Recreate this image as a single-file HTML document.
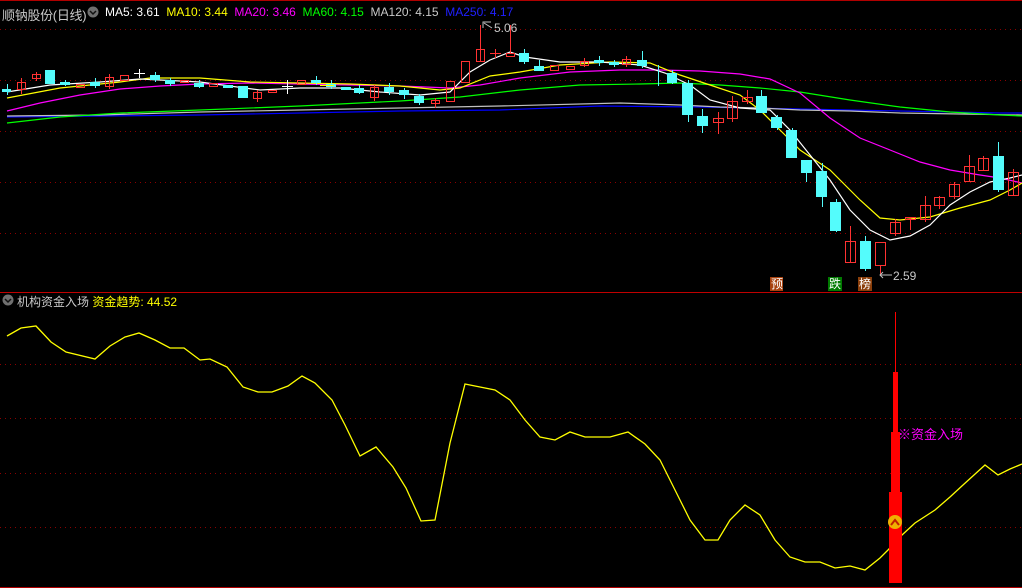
<!DOCTYPE html>
<html><head><meta charset="utf-8"><style>
html,body{margin:0;padding:0;background:#000;}
body{width:1022px;height:588px;position:relative;overflow:hidden;font-family:"Liberation Sans","Noto Sans CJK SC",sans-serif;}
.t{position:absolute;white-space:nowrap;}
</style></head><body>
<svg width="1022" height="588" style="position:absolute;left:0;top:0" shape-rendering="crispEdges">
<g stroke="#8b0000" stroke-dasharray="1,4" stroke-width="1">
<line x1="0" y1="29.5" x2="1022" y2="29.5"/><line x1="0" y1="80.5" x2="1022" y2="80.5"/><line x1="0" y1="131.5" x2="1022" y2="131.5"/><line x1="0" y1="182.5" x2="1022" y2="182.5"/><line x1="0" y1="233.5" x2="1022" y2="233.5"/>
<line x1="0" y1="364.5" x2="1022" y2="364.5"/><line x1="0" y1="418.5" x2="1022" y2="418.5"/><line x1="0" y1="473.5" x2="1022" y2="473.5"/><line x1="0" y1="527.5" x2="1022" y2="527.5"/>
</g>
<line x1="0" y1="0.5" x2="1022" y2="0.5" stroke="#b00000"/>
<line x1="0" y1="292.5" x2="1022" y2="292.5" stroke="#c00000"/>
<line x1="0" y1="587.5" x2="1022" y2="587.5" stroke="#b00000"/>
<g fill="none" stroke-width="1.2" shape-rendering="auto">
<polyline stroke="#0000ff" points="7,117 100,116 200,115 300,113 400,111 500,110 600,106 700,107 800,109 900,111 1000,113 1022,113"/>
<polyline stroke="#c0c0c0" points="7,116 100,115 200,112 300,110 400,108 500,106 620,103 680,105 720,107 760,108 800,110 850,111 900,113 960,114 1022,115"/>
<polyline stroke="#00ff00" points="7,123 60,117 120,113 200,110 300,106 400,101 460,97 520,90 580,85 640,84 680,83 720,85 760,88 800,92 850,100 900,107 950,112 1000,115 1022,116"/>
<polyline stroke="#ff00ff" points="7,111 40,103 80,95 120,89 160,86 200,84 250,83 300,84 350,85 400,86 450,88 480,85 520,78 570,72 620,70 660,70 700,71 740,74 770,79 800,93 830,118 860,138 890,150 920,162 950,170 980,175 1000,178 1022,183"/>
<polyline stroke="#ffff00" points="7,98 60,88 120,82 150,78 200,78 250,82 300,83 350,84 400,86 440,90 460,88 490,76 520,72 560,65 610,62 650,63 680,75 710,85 740,95 760,110 780,130 800,150 830,170 860,200 880,218 900,220 930,217 960,208 990,200 1010,190 1022,183"/>
<polyline stroke="#ffffff" points="7,92 50,85 100,82 140,79 200,82 260,90 300,88 340,88 380,92 420,95 450,92 470,72 490,60 510,52 525,57 560,62 600,62 640,65 665,73 690,85 710,100 740,108 770,110 790,130 810,155 830,180 850,210 870,230 890,240 910,236 930,225 950,205 970,192 990,182 1010,178 1022,175"/>
</g>
<g stroke="#ff3232" fill="none">
<line x1="21.5" y1="78" x2="21.5" y2="94"/><rect x="17.5" y="82.5" width="8" height="7"/>
<line x1="36.5" y1="72" x2="36.5" y2="81"/><rect x="32.5" y="74.5" width="8" height="4"/>
<rect x="76.5" y="84.5" width="8" height="3"/>
<line x1="109.5" y1="74" x2="109.5" y2="89"/><rect x="105.5" y="77.5" width="8" height="9"/>
<rect x="120.5" y="75.5" width="8" height="5"/>
<rect x="180.5" y="80.5" width="8" height="2"/>
<rect x="209.5" y="83.5" width="8" height="3"/>
<line x1="257.5" y1="90" x2="257.5" y2="102"/><rect x="253.5" y="92.5" width="8" height="6"/>
<rect x="268.5" y="90.5" width="8" height="2"/>
<rect x="297.5" y="80.5" width="8" height="4"/>
<line x1="374.5" y1="85" x2="374.5" y2="101"/><rect x="370.5" y="87.5" width="8" height="10"/>
<line x1="435.5" y1="98" x2="435.5" y2="108"/><rect x="431.5" y="100.5" width="8" height="3"/>
<rect x="446.5" y="81.5" width="8" height="20"/>
<rect x="461.5" y="61.5" width="8" height="21"/>
<line x1="480.5" y1="25" x2="480.5" y2="61"/><rect x="476.5" y="49.5" width="8" height="12"/>
<line x1="495.5" y1="49" x2="495.5" y2="58"/><line x1="490" y1="53.5" x2="501" y2="53.5"/>
<line x1="510.5" y1="25" x2="510.5" y2="53"/><rect x="506.5" y="53.5" width="8" height="3"/>
<rect x="550.5" y="65.5" width="8" height="5"/>
<rect x="566.5" y="66.5" width="8" height="3"/>
<line x1="584.5" y1="58" x2="584.5" y2="67"/><rect x="580.5" y="61.5" width="8" height="4"/>
<line x1="626.5" y1="56" x2="626.5" y2="67"/><rect x="622.5" y="59.5" width="8" height="5"/>
<line x1="718.5" y1="112" x2="718.5" y2="134"/><rect x="713.5" y="118.5" width="10" height="4"/>
<line x1="732.5" y1="96" x2="732.5" y2="122"/><rect x="727.5" y="101.5" width="10" height="17"/>
<line x1="747.5" y1="90" x2="747.5" y2="104"/><rect x="742.5" y="97.5" width="10" height="4"/>
<line x1="850.5" y1="226" x2="850.5" y2="262"/><rect x="845.5" y="241.5" width="10" height="21"/>
<line x1="880.5" y1="265" x2="880.5" y2="276"/><rect x="875.5" y="242.5" width="10" height="23"/>
<line x1="895.5" y1="219" x2="895.5" y2="236"/><rect x="890.5" y="222.5" width="10" height="11"/>
<line x1="910.5" y1="217" x2="910.5" y2="230"/><rect x="905.5" y="217.5" width="10" height="2"/>
<line x1="925.5" y1="196" x2="925.5" y2="222"/><rect x="920.5" y="205.5" width="10" height="14"/>
<line x1="939.5" y1="196" x2="939.5" y2="209"/><rect x="934.5" y="197.5" width="10" height="8"/>
<line x1="954.5" y1="182" x2="954.5" y2="199"/><rect x="949.5" y="184.5" width="10" height="12"/>
<line x1="969.5" y1="155" x2="969.5" y2="182"/><rect x="964.5" y="166.5" width="10" height="15"/>
<line x1="983.5" y1="156" x2="983.5" y2="171"/><rect x="978.5" y="158.5" width="10" height="12"/>
<line x1="1013.5" y1="169" x2="1013.5" y2="196"/><rect x="1008.5" y="172.5" width="10" height="23"/>
</g>
<g fill="#54fcfc" stroke="#54fcfc">
<line x1="7.5" y1="84" x2="7.5" y2="95"/><rect x="2.5" y="89.5" width="8" height="2"/>
<rect x="45.5" y="70.5" width="9" height="13"/>
<line x1="65.5" y1="80" x2="65.5" y2="86"/><rect x="60.5" y="82.5" width="9" height="2"/>
<line x1="95.5" y1="78" x2="95.5" y2="88"/><rect x="90.5" y="82.5" width="9" height="3"/>
<line x1="155.5" y1="72" x2="155.5" y2="82"/><rect x="150.5" y="75.5" width="9" height="4"/>
<line x1="170.5" y1="78" x2="170.5" y2="86"/><rect x="165.5" y="80.5" width="9" height="3"/>
<line x1="199.5" y1="80" x2="199.5" y2="88"/><rect x="194.5" y="83.5" width="9" height="3"/>
<rect x="223.5" y="85.5" width="9" height="2"/>
<rect x="238.5" y="86.5" width="9" height="11"/>
<line x1="316.5" y1="76" x2="316.5" y2="85"/><rect x="311.5" y="80.5" width="9" height="2"/>
<line x1="331.5" y1="80" x2="331.5" y2="89"/><rect x="326.5" y="84.5" width="9" height="2"/>
<rect x="341.5" y="87.5" width="9" height="2"/>
<line x1="359.5" y1="85" x2="359.5" y2="94"/><rect x="354.5" y="88.5" width="9" height="4"/>
<line x1="389.5" y1="83" x2="389.5" y2="95"/><rect x="384.5" y="87.5" width="9" height="4"/>
<line x1="404.5" y1="88" x2="404.5" y2="99"/><rect x="399.5" y="90.5" width="9" height="4"/>
<line x1="419.5" y1="94" x2="419.5" y2="105"/><rect x="414.5" y="96.5" width="9" height="6"/>
<line x1="524.5" y1="49" x2="524.5" y2="64"/><rect x="519.5" y="53.5" width="9" height="8"/>
<line x1="539.5" y1="60" x2="539.5" y2="71"/><rect x="534.5" y="66.5" width="9" height="4"/>
<line x1="599.5" y1="56" x2="599.5" y2="66"/><rect x="594.5" y="60.5" width="9" height="2"/>
<line x1="614.5" y1="60" x2="614.5" y2="67"/><rect x="609.5" y="62.5" width="9" height="2"/>
<line x1="642.5" y1="51" x2="642.5" y2="68"/><rect x="637.5" y="60.5" width="9" height="5"/>
<line x1="658.5" y1="65" x2="658.5" y2="86"/>
<line x1="672.5" y1="70" x2="672.5" y2="84"/><rect x="667.5" y="73.5" width="9" height="9"/>
<line x1="688.5" y1="80" x2="688.5" y2="122"/><rect x="682.5" y="83.5" width="10" height="31"/>
<line x1="702.5" y1="109" x2="702.5" y2="133"/><rect x="697.5" y="116.5" width="10" height="9"/>
<line x1="761.5" y1="90" x2="761.5" y2="113"/><rect x="756.5" y="96.5" width="10" height="16"/>
<line x1="777.5" y1="115" x2="777.5" y2="130"/><rect x="771.5" y="117.5" width="10" height="10"/>
<line x1="792.5" y1="128" x2="792.5" y2="158"/><rect x="786.5" y="130.5" width="10" height="27"/>
<line x1="806.5" y1="160" x2="806.5" y2="182"/><rect x="801.5" y="160.5" width="10" height="12"/>
<line x1="822.5" y1="163" x2="822.5" y2="207"/><rect x="816.5" y="171.5" width="10" height="25"/>
<line x1="836.5" y1="199" x2="836.5" y2="232"/><rect x="830.5" y="202.5" width="10" height="28"/>
<line x1="865.5" y1="236" x2="865.5" y2="271"/><rect x="860.5" y="241.5" width="10" height="27"/>
<line x1="998.5" y1="142" x2="998.5" y2="192"/><rect x="993.5" y="156.5" width="10" height="33"/>
</g>
<g stroke="#ffffff">
<line x1="134" y1="73.5" x2="145" y2="73.5"/><line x1="139.5" y1="69" x2="139.5" y2="78"/>
<line x1="282" y1="86.5" x2="293" y2="86.5"/><line x1="287.5" y1="80" x2="287.5" y2="94"/>
</g>
<g fill="#ffff00" stroke="none"><rect x="320" y="85" width="14" height="1"/></g>
<polyline fill="none" stroke="#ffff00" stroke-width="1.3" shape-rendering="auto" points="7,336 21,328 36,326 51,342 66,352 95,359 110,346 125,337 139,333 155,340 170,348 184,348 200,360 210,359 227,367 243,387 258,392 272,392 288,386 302,376 315,383 332,400 345,425 360,456 376,447 393,467 406,488 421,521 435,520 450,443 465,384 480,387 495,390 510,400 525,420 540,437 555,440 570,432 585,437 610,437 628,432 645,444 660,460 675,490 690,520 705,540 718,540 730,520 745,505 760,515 775,540 790,557 805,562 820,562 835,568 850,566 865,570 880,558 888,550 902,535 915,523 935,510 950,497 963,485 985,465 998,475 1010,469 1022,464"/>
<g fill="#ff0000" stroke="none">
<rect x="895" y="312" width="1" height="60"/>
<rect x="893" y="372" width="5" height="60"/>
<rect x="891" y="432" width="9" height="60"/>
<rect x="889" y="492" width="13" height="91"/>
</g>
<circle cx="895" cy="522" r="7" fill="#f0b000" shape-rendering="auto"/>
<polyline points="891,525 895,520 899,525" fill="none" stroke="#c02000" stroke-width="2" shape-rendering="auto"/>
<g stroke="#c0c0c0" fill="none" shape-rendering="auto"><polyline points="491,22 483,22 483,28"/><line x1="484" y1="23" x2="492" y2="28"/>
<line x1="880" y1="275" x2="892" y2="275"/><polyline points="883,272 880,275 883,278"/></g>
<circle cx="93" cy="12" r="5.5" fill="#707070" shape-rendering="auto"/>
<polyline points="90,11 93,14 96,11" fill="none" stroke="#111" stroke-width="1.5" shape-rendering="auto"/>
<circle cx="8" cy="300" r="5.5" fill="#707070" shape-rendering="auto"/>
<polyline points="5,299 8,302 11,299" fill="none" stroke="#111" stroke-width="1.5" shape-rendering="auto"/>
<rect x="770" y="277" width="13" height="14" fill="#a8420f"/>
<rect x="828" y="277" width="14" height="14" fill="#007a00"/>
<rect x="858" y="277" width="14" height="14" fill="#8a3e0a"/>
</svg>
<div class="t" style="left:2px;top:5px;font-size:13px;letter-spacing:-0.3px;color:#c8c8c8;">顺钠股份(日线)</div>
<div class="t" style="left:105px;top:5px;font-size:12px;"><span style="color:#fff">MA5: 3.61</span>&nbsp;&nbsp;<span style="color:#ffff00">MA10: 3.44</span>&nbsp;&nbsp;<span style="color:#ff00ff">MA20: 3.46</span>&nbsp;&nbsp;<span style="color:#00ff00">MA60: 4.15</span>&nbsp;&nbsp;<span style="color:#c8c8c8">MA120: 4.15</span>&nbsp;&nbsp;<span style="color:#2020ff">MA250: 4.17</span></div>
<div class="t" style="left:494px;top:21px;font-size:12px;color:#c8c8c8;">5.06</div>
<div class="t" style="left:893px;top:269px;font-size:12px;color:#c8c8c8;">2.59</div>
<div class="t" style="left:771px;top:277px;font-size:12px;line-height:14px;color:#fff;">预</div>
<div class="t" style="left:829px;top:277px;font-size:12px;line-height:14px;color:#fff;">跌</div>
<div class="t" style="left:859px;top:277px;font-size:12px;line-height:14px;color:#fff;">榜</div>
<div class="t" style="left:17px;top:293px;font-size:12px;color:#c8c8c8;">机构资金入场 <span style="color:#ffff00">资金趋势: 44.52</span></div>
<div class="t" style="left:898px;top:424px;font-size:13px;color:#ff00ff;">※资金入场</div>
</body></html>
